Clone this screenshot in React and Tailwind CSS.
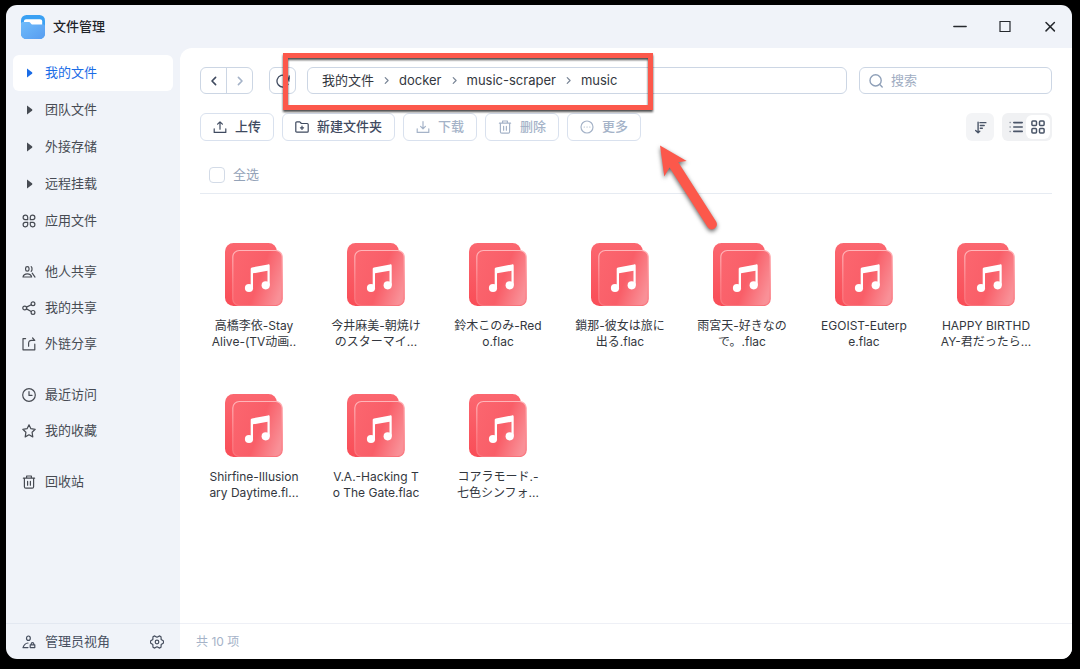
import { useState } from "react";
import clsx from "clsx";

const FILES = [
  ["高橋李依-Stay", "Alive-(TV动画.."],
  ["今井麻美-朝焼け", "のスターマイ..."],
  ["鈴木このみ-Red", "o.flac"],
  ["鎖那-彼女は旅に", "出る.flac"],
  ["雨宮天-好きなの", "で。.flac"],
  ["EGOIST-Euterp", "e.flac"],
  ["HAPPY BIRTHD", "AY-君だったら..."],
  ["Shirfine-Illusion", "ary Daytime.fl..."],
  ["V.A.-Hacking T", "o The Gate.flac"],
  ["コアラモード.-", "七色シンフォ..."],
];

const CRUMBS = ["我的文件", "docker", "music-scraper", "music"];

function Icon({ className = "w-[14px] h-[14px]", children }) {
  return (
    <svg viewBox="0 0 14 14" className={clsx("shrink-0", className)} fill="none" stroke="currentColor"
      strokeWidth="1.2" strokeLinecap="round" strokeLinejoin="round" aria-hidden="true">
      {children}
    </svg>
  );
}

const CaretIcon = () => (
  <Icon><path d="M5 2.4v9.200l5-3.900a.9.9 0 0 0 0-1.400z" fill="currentColor" stroke="none" /></Icon>
);

const AppsIcon = () => (
  <Icon>
    <path d="M5.7 5.7H3.1a2.300 2.300 0 1 1 2.600-2.600zM8.300 5.700V3.100a2.300 2.300 0 1 1 2.600 2.600zM5.700 8.300v2.600a2.300 2.300 0 1 1-2.600-2.600zM8.300 8.300h2.600a2.300 2.300 0 1 1-2.600 2.600z" />
  </Icon>
);

const PeopleIcon = () => (
  <Icon>
    <rect x="3.6" y="1.6" width="3.4" height="4.6" rx="1.7" />
    <path d="M9.2 1.6c1.1.9 1.1 3.7 0 4.7M1 12c.4-2.200 1.800-3.200 4.300-3.200s3.900 1 4.300 3.200zM10.200 8.200l2.800 3.900" />
  </Icon>
);

const ShareIcon = () => (
  <Icon>
    <circle cx="2.7" cy="7" r="1.9" />
    <circle cx="11" cy="2.7" r="1.9" />
    <circle cx="11" cy="11.4" r="1.9" />
    <path d="M4.500 6.100l4.700-2.400M4.500 7.900l4.700 2.600" />
  </Icon>
);

const LinkOutIcon = () => (
  <Icon>
    <path d="M3.6 1.6H1v11.200h11.800V7.200M6.600 9.200V6.600c0-2.200 1-3.300 3-3.300h2.800M10.600 1l2.200 2.300" />
  </Icon>
);

const ClockIcon = () => (
  <Icon><circle cx="7" cy="7" r="6.3" /><path d="M7 3.6v3.800h3" /></Icon>
);

const StarIcon = () => (
  <Icon><path d="M7 .8l1.900 3.900 4.300.6-3.100 3 .7 4.600L7 10.800l-3.800 2.100.7-4.600-3.100-3 4.300-.6z" /></Icon>
);

const TrashIcon = ({ className }) => (
  <Icon className={className}>
    <path d="M1.400 3.200h11.200M4.600 3V1h4.800v2M2.400 3.400v8.300c0 .9.5 1.500 1.400 1.500h6.400c.9 0 1.400-.6 1.400-1.500V3.400M5.600 6.400v3.800M8.400 6.400v3.800" />
  </Icon>
);

const AdminIcon = () => (
  <Icon>
    <ellipse cx="6.4" cy="3.2" rx="1.9" ry="2.2" />
    <path d="M6 8C3.600 8.200 1.900 9.800 1 12.600h5M8.200 9.800h4.600v2.800H8.200zM9.200 9.600V9a1.300 1.300 0 0 1 2.600 0v.6" />
  </Icon>
);

const GearIcon = () => (
  <Icon>
    <path d="M4.300.9L7 2.200 9.700.9l1.300.8.200 2.900 2.300 1.500v1.800l-2.300 1.500-.2 2.900-1.300.8L7 11.800l-2.700 1.300-1.300-.8-.2-2.900L.5 7.900V6.100l2.300-1.500L3 1.700z" />
    <circle cx="7" cy="7" r="1.800" />
  </Icon>
);

const UploadIcon = () => (
  <Icon><path d="M7 9.200V2M4.600 4.200L7 1.800l2.400 2.400M1.200 8.800v3.600h11.600V8.800" /></Icon>
);

const DownloadIcon = () => (
  <Icon><path d="M7 1.600v7M4.600 6.400L7 8.800l2.400-2.400M1.200 8.800v3.600h11.600V8.800" /></Icon>
);

const NewFolderIcon = () => (
  <Icon>
    <path d="M.8 11.200V2.800c0-.6.4-1 1-1h3l1.600 1.700h5.800c.6 0 1 .4 1 1v6.700c0 .6-.4 1-1 1H1.800c-.6 0-1-.4-1-1zM7 6.200v3.200M5.400 7.800h3.200" />
  </Icon>
);

const MoreIcon = () => (
  <Icon>
    <circle cx="7" cy="7" r="6" />
    <path d="M4.200 7h.1M7 7h.1M9.800 7h.1" />
  </Icon>
);

const SortIcon = () => (
  <Icon className="w-[13px] h-[13px]">
    <path d="M4.400 1.400v11M1.800 10.200l2.600 2.400 1.800-1.600M6.400 1.800h6.400M6.800 4.800h4.200M6.800 7.800h2.200" strokeWidth="1.5" />
  </Icon>
);

const ListIcon = () => (
  <Icon>
    <path d="M4.800 2.600h8.400M4.800 7h8.400M4.800 11.400h8.400" strokeWidth="1.6" />
    <path d="M1 2.600h.4M1 7h.4M1 11.400h.4" strokeWidth="1.5" opacity=".5" />
  </Icon>
);

const GridIcon = () => (
  <Icon>
    <g strokeWidth="1.5">
      <rect x=".9" y=".9" width="4.6" height="4.6" rx="1" />
      <rect x="8.500" y=".9" width="4.6" height="4.6" rx="1" />
      <rect x=".9" y="8.500" width="4.6" height="4.6" rx="1" />
      <rect x="8.500" y="8.500" width="4.6" height="4.6" rx="1" />
    </g>
  </Icon>
);

const Chevron = ({ left, className = "w-[14px] h-[14px]" }) => (
  <Icon className={className}>
    <path d={left ? "M8.600 3.400L5 7l3.600 3.600" : "M5.400 3.400L9 7l-3.600 3.600"} strokeWidth="1.6" />
  </Icon>
);

function AppLogo() {
  return (
    <svg viewBox="0 0 24 24" className="w-6 h-6 shrink-0" aria-hidden="true">
      <defs>
        <linearGradient id="logo" x1="0" y1="0" x2="1" y2="1">
          <stop offset="0" stopColor="#6fbcfb" />
          <stop offset="1" stopColor="#579cf0" />
        </linearGradient>
      </defs>
      <rect width="24" height="24" rx="5.5" fill="#3aa0f3" />
      <path d="M3 10V6.200C3 5 3.800 4.200 5 4.200h14c1.400 0 2.200.8 2.200 2V11H3z" fill="#fff" />
      <path d="M0 8.600C0 7.600.8 7 1.800 7h6c1.800 0 1.900 2.600 4 2.600h10.400c1 0 1.800.6 1.800 1.500v7.400a5.500 5.500 0 0 1-5.500 5.500h-13A5.500 5.500 0 0 1 0 18.500z" fill="url(#logo)" />
    </svg>
  );
}

function MusicFileIcon() {
  return (
    <svg viewBox="0 0 58 63" className="w-[58px] h-[63px]" aria-hidden="true">
      <defs>
        <linearGradient id="back" x1="0" y1="0" x2="0" y2="1">
          <stop offset="0" stopColor="#fb6770" />
          <stop offset="1" stopColor="#f94d57" />
        </linearGradient>
        <linearGradient id="front" x1="0" y1="0.25" x2="1" y2="0.65">
          <stop offset="0" stopColor="#fb656e" />
          <stop offset="0.55" stopColor="#f95e68" />
          <stop offset="1" stopColor="#f99097" />
        </linearGradient>
        <linearGradient id="edge" x1="0" y1="0" x2="0" y2="1">
          <stop offset="0" stopColor="#ffb5b9" />
          <stop offset="0.6" stopColor="#fd858c" />
          <stop offset="1" stopColor="#f9747c" />
        </linearGradient>
      </defs>
      <rect width="52" height="63" rx="8.5" fill="url(#back)" />
      <rect x="7.800" y="7.500" width="49.4" height="55" rx="6.5" fill="url(#front)" stroke="url(#edge)" strokeWidth="1.2" />
      <g fill="#fff">
        <circle cx="24" cy="45" r="4.100" />
        <circle cx="40.700" cy="42.300" r="4.100" />
        <path d="M25.700 26c0-.8.500-1.300 1.300-1.500l16-3.100c1-.2 1.700.3 1.700 1.300v19.600h-2.200V27.800l-14.500 2.500V45h-2.300z" />
      </g>
    </svg>
  );
}

function NavItem({ icon: ItemIcon, label, active, onClick }) {
  return (
    <button type="button" onClick={onClick}
      className={clsx(
        "flex items-center gap-[9px] h-9 pl-[9px] rounded-md text-left text-[13px]",
        active ? "bg-white text-[#1a6ce6]" : "text-[#474b53]"
      )}>
      <ItemIcon />
      {label}
    </button>
  );
}

function ToolButton({ icon: ItemIcon, label, disabled }) {
  return (
    <button type="button" disabled={disabled}
      className={clsx(
        "flex items-center gap-2 h-7 px-3 rounded-md border border-[#d9e1ee] text-[13px] font-medium",
        disabled ? "text-[#a5b3c8]" : "text-[#3f4a5f]"
      )}>
      <ItemIcon className="w-[14px] h-[14px]" />
      {label}
    </button>
  );
}

const NAV = [
  [
    { label: "我的文件", icon: CaretIcon },
    { label: "团队文件", icon: CaretIcon },
    { label: "外接存储", icon: CaretIcon },
    { label: "远程挂载", icon: CaretIcon },
    { label: "应用文件", icon: AppsIcon },
  ],
  [
    { label: "他人共享", icon: PeopleIcon },
    { label: "我的共享", icon: ShareIcon },
    { label: "外链分享", icon: LinkOutIcon },
  ],
  [
    { label: "最近访问", icon: ClockIcon },
    { label: "我的收藏", icon: StarIcon },
  ],
  [{ label: "回收站", icon: TrashIcon }],
];

export default function App() {
  const [current, setCurrent] = useState("我的文件");

  return (
    <div className="relative min-h-screen flex bg-black pt-[5px] pl-[6px] pr-2 pb-[10px] font-['Inter','Noto_Sans_CJK_SC',sans-serif]">
      <div className="flex-1 min-w-0 flex flex-col rounded-[11px] overflow-hidden bg-[#f0f3f9]">

        {/* Title bar */}
        <header className="flex items-center h-[43px] pl-[15px] pr-[15px]">
          <AppLogo />
          <h1 className="ml-2 text-[13px] font-medium text-[#1f2329]">文件管理</h1>
          <div className="ml-auto flex items-center gap-[31px] text-[#26292e]">
            <button type="button" aria-label="最小化"><Icon><path d="M.8 6.500h12.400" strokeWidth="1.3" /></Icon></button>
            <button type="button" aria-label="最大化"><Icon><path d="M2 1.500h10v10H2z" strokeLinejoin="miter" /></Icon></button>
            <button type="button" aria-label="关闭"><Icon><path d="M3 2.500l8.400 8.400M11.400 2.500L3 10.900" strokeWidth="1.5" /></Icon></button>
          </div>
        </header>

        <div className="flex-1 flex">
          {/* Sidebar */}
          <aside className="w-[174px] shrink-0 flex flex-col">
            <nav className="flex-1 flex flex-col gap-[15px] px-[7px] pt-[7px]">
              {NAV.map((group, i) => (
                <div key={i} className={clsx("flex flex-col", i === 0 && "gap-px")}>
                  {group.map((item) => (
                    <NavItem key={item.label} {...item}
                      active={item.label === current}
                      onClick={() => setCurrent(item.label)} />
                  ))}
                </div>
              ))}
            </nav>
            <div className="flex items-center gap-[9px] h-9 px-4 border-t border-[#e3e8f1] text-[#474f5f]">
              <AdminIcon />
              <span className="text-[13px]">管理员视角</span>
              <button type="button" aria-label="设置" className="ml-auto"><GearIcon /></button>
            </div>
          </aside>

          {/* Files */}
          <main className="flex-1 min-w-0 flex flex-col bg-white rounded-tl-xl">
            <div className="px-5 pt-[19px]">
              <div className="flex items-center h-[27px]">
                <div className="flex h-full rounded-md border border-[#ccd6e4] text-[#3f4a5f]">
                  <button type="button" aria-label="后退" className="w-[26px] flex items-center justify-center border-r border-[#ccd6e4]"><Chevron left /></button>
                  <button type="button" aria-label="前进" className="w-[25px] flex items-center justify-center text-[#a5b3c8]"><Chevron /></button>
                </div>
                <button type="button" aria-label="刷新" className="ml-4 w-[27px] h-full flex items-center justify-center rounded-md border border-[#ccd6e4] text-[#3f4a5f]">
                  <Icon><path d="M12 10.400A6 6 0 1 1 13 7M13.200 1.800v3.200h-3" strokeWidth="1.3" /></Icon>
                </button>
                <nav aria-label="路径" className="ml-[11px] flex-1 h-full flex items-center gap-1 px-[14px] rounded-md border border-[#ccd6e4] text-[13px] text-[#33373e]">
                  {CRUMBS.map((crumb, i) => (
                    <span key={crumb} className="flex items-center gap-1">
                      {i > 0 && <span className="w-[17px] flex justify-center text-[#7b8798]"><Chevron className="w-[11px] h-[11px]" /></span>}
                      <a href="#">{crumb}</a>
                    </span>
                  ))}
                </nav>
                <label className="ml-3 w-[193px] h-full flex items-center gap-2 px-[9px] rounded-md border border-[#ccd6e4] text-[#8fa0b8]">
                  <Icon><circle cx="6.600" cy="6.400" r="5.600" strokeWidth="1.4" /><path d="M10.800 10.600l2.400 2.400" strokeWidth="1.4" /></Icon>
                  <input type="text" aria-label="搜索" placeholder="搜索"
                    className="flex-1 min-w-0 bg-transparent outline-none text-[13px] placeholder:text-[#9fadc2]" />
                </label>
              </div>

              {/* Toolbar */}
              <div className="flex items-center gap-2 mt-[19px]">
                <ToolButton icon={UploadIcon} label="上传" />
                <ToolButton icon={NewFolderIcon} label="新建文件夹" />
                <ToolButton icon={DownloadIcon} label="下载" disabled />
                <ToolButton icon={TrashIcon} label="删除" disabled />
                <ToolButton icon={MoreIcon} label="更多" disabled />
                <button type="button" aria-label="排序" className="ml-auto w-7 h-7 flex items-center justify-center rounded-md bg-[#f3f4f6] text-[#4a5568]">
                  <SortIcon />
                </button>
                <div className="flex items-center h-7 pl-[7px] pr-[2px] gap-[3px] rounded-md bg-[#f0f1f3] text-[#4a5568]">
                  <button type="button" aria-label="列表视图"><ListIcon /></button>
                  <button type="button" aria-label="网格视图" className="w-6 h-6 flex items-center justify-center rounded-md bg-white"><GridIcon /></button>
                </div>
              </div>

              <div className="flex items-center h-[53px] pt-4 pl-[9px] border-b border-[#e6ebf2]">
                <label className="flex items-center gap-2 text-[13px] text-[#94a3b8]">
                  <input type="checkbox" className="appearance-none w-4 h-4 rounded border border-[#d3dbe7] bg-white checked:bg-[#1a6ce6]" />
                  全选
                </label>
              </div>
            </div>

            <ul className="flex-1 grid grid-cols-[repeat(auto-fill,122px)] content-start gap-y-11 px-[13px] pt-[49px]">
              {FILES.map(([first, second]) => (
                <li key={first} className="flex flex-col items-center text-center">
                  <MusicFileIcon />
                  <p className="mt-3 text-xs leading-4 text-[#33373e] whitespace-nowrap">
                    {first}<br />{second}
                  </p>
                </li>
              ))}
            </ul>

            <footer className="flex items-center h-9 px-4 border-t border-[#eef0f6] text-xs text-[#a5b3c8]">
              共 10 项
            </footer>
          </main>
        </div>
      </div>

      {/* Callout drawn over the path bar */}
      <div className="absolute left-[283px] top-[53px] w-[370px] h-[57px] border-[5px] border-[#fc584b] pointer-events-none drop-shadow-[0_2px_1px_rgba(0,0,0,0.7)]" />
      <svg viewBox="0 0 70 96" className="absolute left-[654px] top-[140px] w-[70px] h-24 pointer-events-none drop-shadow-[0_2px_2px_rgba(0,0,0,0.6)]" aria-hidden="true">
        <path d="M6 5.500L32.700 21l-8.400 1.300 37.800 59.200c3.500 6-5 11.200-8.700 5.300L15.500 27.500l-5.200 9z" fill="#fc584b" />
      </svg>
    </div>
  );
}
